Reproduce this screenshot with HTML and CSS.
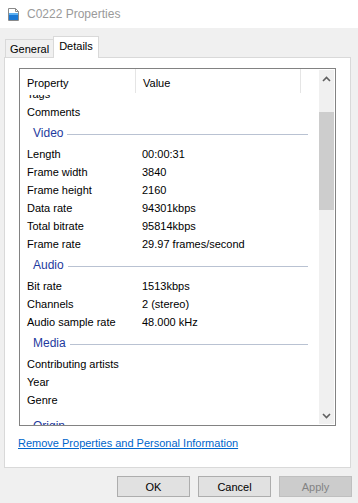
FILE: index.html
```html
<!DOCTYPE html>
<html lang="en">
<head>
    <meta charset="UTF-8">
    <title>C0222 Properties</title>
    <link rel="stylesheet" href="styles.css">
</head>
<body>
    <div class="window">
        <div class="titlebar">
            <svg class="title-icon" width="11" height="13" viewBox="0 0 11 13">
                <path d="M0.5 0.5 H7.5 L10.5 3.5 V12.5 H0.5 Z" fill="#fff" stroke="#8a8a8a"/>
                <path d="M7.5 0.5 V3.5 H10.5" fill="none" stroke="#8a8a8a"/>
                <rect x="1" y="5" width="9" height="7" fill="#1a78d4"/>
                <rect x="1" y="5" width="9" height="2" fill="#5aaef0"/>
            </svg>
            <span class="title">C0222 Properties</span>
        </div>

        <div class="tabs">
            <div class="tab">General</div>
            <div class="tab active">Details</div>
        </div>

        <div class="panel">
            <div class="listbox">
                <div class="list-main">
                    <div class="list-head">
                        <div class="col col-prop">Property</div>
                        <div class="col col-val">Value</div>
                        <div class="col col-rest"></div>
                    </div>
                    <div class="list-body">
                        <div class="rows">
                            <div class="row"><span class="k">Tags</span><span class="v"></span></div>
                            <div class="row"><span class="k">Comments</span><span class="v"></span></div>

                            <div class="group"><span>Video</span></div>
                            <div class="row"><span class="k">Length</span><span class="v">00:00:31</span></div>
                            <div class="row"><span class="k">Frame width</span><span class="v">3840</span></div>
                            <div class="row"><span class="k">Frame height</span><span class="v">2160</span></div>
                            <div class="row"><span class="k">Data rate</span><span class="v">94301kbps</span></div>
                            <div class="row"><span class="k">Total bitrate</span><span class="v">95814kbps</span></div>
                            <div class="row"><span class="k">Frame rate</span><span class="v">29.97 frames/second</span></div>

                            <div class="group"><span>Audio</span></div>
                            <div class="row"><span class="k">Bit rate</span><span class="v">1513kbps</span></div>
                            <div class="row"><span class="k">Channels</span><span class="v">2 (stereo)</span></div>
                            <div class="row"><span class="k">Audio sample rate</span><span class="v">48.000 kHz</span></div>

                            <div class="group"><span>Media</span></div>
                            <div class="row"><span class="k">Contributing artists</span><span class="v"></span></div>
                            <div class="row"><span class="k">Year</span><span class="v"></span></div>
                            <div class="row"><span class="k">Genre</span><span class="v"></span></div>

                            <div class="group"><span>Origin</span></div>
                        </div>
                    </div>
                </div>
                <div class="scrollbar">
                    <div class="arrow">
                        <svg width="9" height="6" viewBox="0 0 9 6"><path d="M1 5 L4.5 1.5 L8 5" fill="none" stroke="#606060" stroke-width="1.6"/></svg>
                    </div>
                    <div class="track">
                        <div class="thumb"></div>
                    </div>
                    <div class="arrow">
                        <svg width="9" height="6" viewBox="0 0 9 6"><path d="M1 1 L4.5 4.5 L8 1" fill="none" stroke="#606060" stroke-width="1.6"/></svg>
                    </div>
                </div>
            </div>

            <a class="remove-link" href="#">Remove Properties and Personal Information</a>
        </div>

        <div class="buttons">
            <button class="btn">OK</button>
            <button class="btn">Cancel</button>
            <button class="btn disabled">Apply</button>
        </div>
    </div>
</body>
</html>
```

FILE: styles.css
```css
body {
    margin: 0;
    background-color: #f0f0f0;
    font-family: "Liberation Sans", Arial, sans-serif;
    font-size: 11px;
    color: #000;
}
.window {
    width: 358px;
    height: 503px;
    overflow: hidden;
}
.titlebar {
    height: 28px;
    background: white;
    display: flex;
    align-items: center;
    padding-left: 8px;
}
.title-icon {
    margin-right: 8px;
}
.title {
    font-size: 12px;
    color: #9a9a9a;
}
.tabs {
    display: flex;
    align-items: flex-end;
    height: 29px;
    padding-left: 5px;
}
.tab {
    height: 17px;
    padding: 0 4px;
    line-height: 18px;
    border: 1px solid #d9d9d9;
    border-bottom: none;
    background: #f0f0f0;
}
.tab.active {
    height: 21px;
    line-height: 19px;
    background: white;
    margin-left: -1px;
    margin-bottom: -1px;
    padding: 0 5px;
    position: relative;
    z-index: 1;
}
.panel {
    margin-left: 4px;
    width: 345px;
    height: 409px;
    background: white;
    border: 1px solid #d9d9d9;
}
.listbox {
    margin: 10px 0 0 14px;
    width: 315px;
    height: 356px;
    border: 1px solid #828282;
    display: flex;
}
.list-main {
    flex: 1;
    display: flex;
    flex-direction: column;
    min-width: 0;
}
.list-head {
    display: flex;
    height: 26px;
}
.col {
    padding: 8px 0 0 7px;
    height: 16px;
}
.col-prop {
    width: 108px;
    border-right: 1px solid #e5e5e5;
}
.col-val {
    width: 157px;
    border-right: 1px solid #e5e5e5;
}
.col-rest {
    flex: 1;
}
.list-body {
    flex: 1;
    overflow: hidden;
}
.rows {
    margin-top: -10px;
}
.row {
    display: flex;
    height: 18px;
    line-height: 18px;
}
.row .k {
    width: 115px;
    padding-left: 7px;
}
.group {
    display: flex;
    align-items: center;
    height: 24px;
    padding: 0 11px 0 13px;
    color: #1e3a9e;
    font-size: 12px;
}
.group::after {
    content: "";
    flex: 1;
    height: 1px;
    background: #b9c2d2;
    margin-left: 4px;
    margin-top: 2px;
}
.group:last-child {
    padding-top: 5px;
}
.scrollbar {
    width: 15px;
    margin: 1px 1px 1px 0;
    background: #f0f0f0;
    display: flex;
    flex-direction: column;
}
.arrow {
    height: 17px;
    display: flex;
    align-items: center;
    justify-content: center;
}
.track {
    flex: 1;
}
.thumb {
    margin-top: 25px;
    height: 98px;
    background: #cdcdcd;
}
.remove-link {
    display: inline-block;
    margin: 11px 0 0 13px;
    color: #0066cc;
    text-decoration: underline;
}
.buttons {
    display: flex;
    justify-content: flex-end;
    gap: 8px;
    padding: 8px 6px 0 0;
}
.btn {
    width: 73px;
    height: 21px;
    font-family: "Liberation Sans", Arial, sans-serif;
    font-size: 11px;
    background: #e1e1e1;
    border: 1px solid #adadad;
    color: #000;
    padding: 0;
}
.btn.disabled {
    background: #cccccc;
    border-color: #bfbfbf;
    color: #838383;
}
```
